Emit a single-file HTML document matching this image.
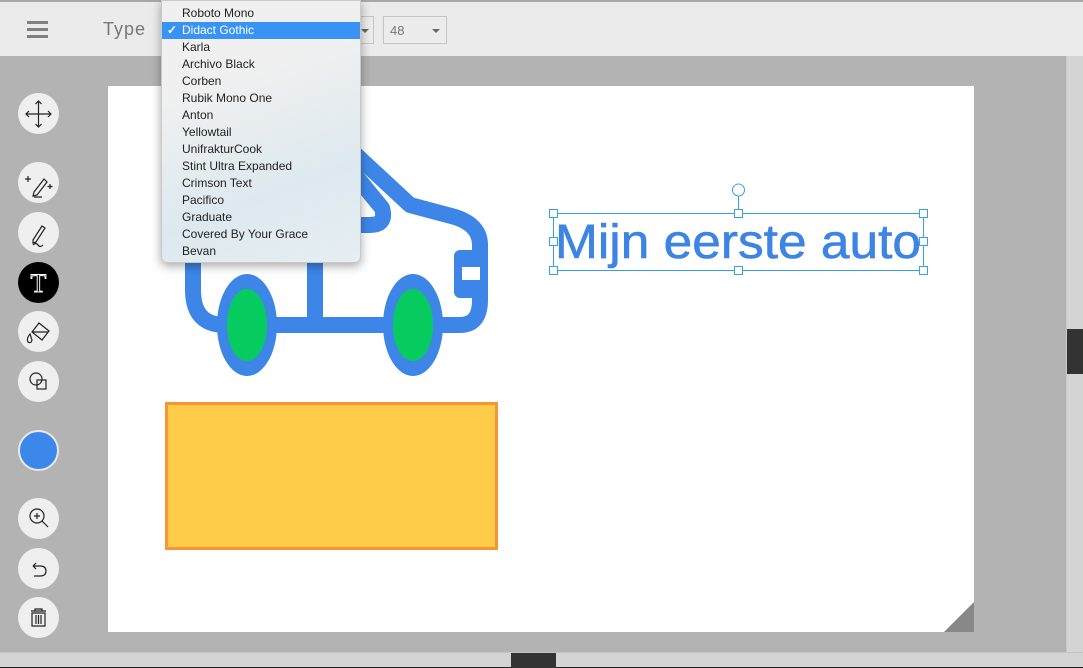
<!DOCTYPE html>
<html><head><meta charset="utf-8"><style>
*{margin:0;padding:0;box-sizing:border-box}
body{width:1083px;height:668px;overflow:hidden;background:#b3b3b3;font-family:"Liberation Sans",Arial,sans-serif;position:relative}
.top{position:absolute;left:0;top:0;width:1083px;height:56px;background:#ebebeb;border-top:2px solid #a8a8a8}
.ham{position:absolute;left:27px;width:21px;height:3px;background:#808080}
.type{position:absolute;left:103px;top:17px;font-size:18px;color:#777;letter-spacing:1px}
.sel{position:absolute;top:14px;height:28px;border:1px solid #c4c4c4;background:#ececec;font-size:13px;color:#777}
.arr{position:absolute;width:0;height:0;border-left:4px solid transparent;border-right:4px solid transparent;border-top:4px solid #666}
.btn{position:absolute;left:18px;width:41px;height:41px;border-radius:50%;background:#efefef}
.vtrack{position:absolute;left:1066px;top:56px;width:17px;height:596px;background:#d4d4d4;border-left:1px solid #c8c8c8}
.htrack{position:absolute;left:0;top:652px;width:1083px;height:16px;background:#d4d4d4;border-top:1px solid #c4c4c4;border-bottom:1px solid #222}
.dd{position:absolute;left:161px;top:0;width:200px;height:263px;border-radius:0 0 6px 6px;background:linear-gradient(160deg,#f0f0f0 30%,#dde9ef 70%,#e6eef2);box-shadow:0 3px 10px rgba(0,0,0,.35);border:1px solid #c9c9c9}
.it{position:absolute;left:0;width:198px;height:17px;line-height:17px;font-size:12px;color:#222;padding-left:20px}
.it.s{background:#3993f3;color:#fff}
</style></head><body>
<div class="top">
 <div class="ham" style="top:19px"></div><div class="ham" style="top:26px"></div><div class="ham" style="top:33px"></div>
 <div class="type">Type</div>
 <div class="sel" style="left:340px;width:34px"><div class="arr" style="left:20px;top:12px"></div></div>
 <div class="sel" style="left:383px;width:64px"><span style="position:absolute;left:6px;top:6px">48</span><div class="arr" style="left:48px;top:12px"></div></div>
</div>

<div style="position:absolute;left:108px;top:86px;width:866px;height:546px;background:#fff"></div>
<svg style="position:absolute;left:0;top:0" width="1083" height="668">
 <polygon points="944,632 974,602 974,632" fill="#888"/>
 <g fill="none" stroke="#3d86e8" stroke-width="16" stroke-linejoin="round" stroke-linecap="round">
  <path d="M193,240 L193,290 Q193,325 225,325 L460,325 Q480,325 480,300 L480,245 Q480,225 455,217 L410,205 L340,140"/>
  <path d="M315,250 L315,320"/>
  <path d="M355,175 L382,208 Q387,225 370,225 L330,225"/>
 </g>
 <rect x="454" y="250" width="34" height="48" rx="6" fill="#3d86e8"/>
 <rect x="462" y="267" width="18" height="13" fill="#fff"/>
 <ellipse cx="247" cy="325" rx="30" ry="51" fill="#3d86e8"/><ellipse cx="247" cy="325" rx="20" ry="36" fill="#06cc5f"/>
 <ellipse cx="413" cy="325" rx="30" ry="51" fill="#3d86e8"/><ellipse cx="413" cy="325" rx="20" ry="36" fill="#06cc5f"/>
 <rect x="166.5" y="403.5" width="330" height="145" fill="#ffcc4a" stroke="#f59637" stroke-width="3"/>
 <text x="555" y="258" font-family="Liberation Sans,sans-serif" font-size="48" fill="#3d84e3" stroke="#3d84e3" stroke-width="0.6" textLength="366" lengthAdjust="spacingAndGlyphs">Mijn eerste auto</text>
 <g stroke="#36a3dd" fill="#fff" stroke-width="1">
  <rect x="553.5" y="213.5" width="370" height="57" fill="none"/>
  <line x1="738.5" y1="196" x2="738.5" y2="213"/>
  <circle cx="738.5" cy="190" r="6"/>
  <rect x="549.5" y="209.5" width="8" height="8"/><rect x="734.5" y="209.5" width="8" height="8"/><rect x="919.5" y="209.5" width="8" height="8"/>
  <rect x="549.5" y="237.5" width="8" height="8"/><rect x="919.5" y="237.5" width="8" height="8"/>
  <rect x="549.5" y="266.5" width="8" height="8"/><rect x="734.5" y="266.5" width="8" height="8"/><rect x="919.5" y="266.5" width="8" height="8"/>
 </g>
</svg>

<div class="btn" style="top:93px"></div>
<div class="btn" style="top:162px"></div>
<div class="btn" style="top:212px"></div>
<div class="btn" style="top:262px;background:#000"></div>
<div class="btn" style="top:311px"></div>
<div class="btn" style="top:361px"></div>
<div class="btn" style="top:430px;background:#3b87ea;border:2px solid #e8e8e8"></div>
<div class="btn" style="top:498px"></div>
<div class="btn" style="top:548px"></div>
<div class="btn" style="top:597px"></div>
<svg style="position:absolute;left:0;top:0" width="80" height="668" fill="none" stroke="#222" stroke-width="1.2">
 <path d="M26,114H51M38.5,101V127M29,111l-3,3 3,3M48,111l3,3-3,3M35.5,104l3-3 3,3M35.5,124l3,3 3-3"/>
 <path d="M34,192l10-13 3,3-10,13-4,1z M34,197h8 M28,176v6M25,179h6 M50,184v5M47.5,186.5h5"/>
 <path d="M33,240l9-14 3,2-9,14-3,1z M33,245q3-3 5,0t5,0"/>
 <text x="38.5" y="292" font-family="Liberation Serif,serif" font-size="26" fill="#000" stroke="#fff" stroke-width="0.9" text-anchor="middle">T</text>
 <path d="M32,332l7-9 10,8-7,9z M32,332h16 M30,334q-4,5-2,8q3,2 4-2z"/>
 <circle cx="36" cy="379" r="6"/><rect x="37" y="380" width="9" height="9"/>
 <circle cx="37" cy="516" r="7"/><path d="M42,521l6,6 M34,516h6M37,513v6"/>
 <path d="M33,566h7q6,0 6,5t-6,5h-6 M33,566l3-3M33,566l3,3"/>
 <path d="M31,611h15M35,611v-2h7v2M32,613h13v13h-13zM36,615v9M38.5,615v9M41,615v9"/>
</svg>

<div class="vtrack"><div style="position:absolute;left:0;top:273px;width:17px;height:45px;background:#333"></div></div>
<div class="htrack"><div style="position:absolute;left:511px;top:0;width:45px;height:15px;background:#333"></div></div>

<div class="dd">
 <div class="it" style="top:4px">Roboto Mono</div>
 <div class="it s" style="top:21px"><span style="position:absolute;left:5px;font-weight:bold">✓</span>Didact Gothic</div>
 <div class="it" style="top:38px">Karla</div>
 <div class="it" style="top:55px">Archivo Black</div>
 <div class="it" style="top:72px">Corben</div>
 <div class="it" style="top:89px">Rubik Mono One</div>
 <div class="it" style="top:106px">Anton</div>
 <div class="it" style="top:123px">Yellowtail</div>
 <div class="it" style="top:140px">UnifrakturCook</div>
 <div class="it" style="top:157px">Stint Ultra Expanded</div>
 <div class="it" style="top:174px">Crimson Text</div>
 <div class="it" style="top:191px">Pacifico</div>
 <div class="it" style="top:208px">Graduate</div>
 <div class="it" style="top:225px">Covered By Your Grace</div>
 <div class="it" style="top:242px">Bevan</div>
</div>
</body></html>
